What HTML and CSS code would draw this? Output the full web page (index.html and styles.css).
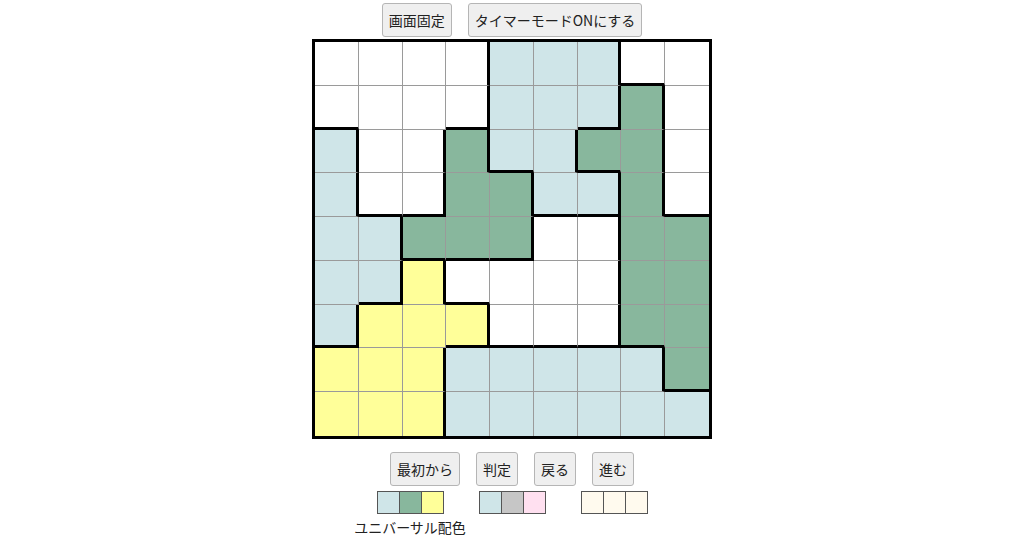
FILE: index.html
```html
<!DOCTYPE html>
<html lang="ja">
<head>
<meta charset="utf-8">
<title>パズル</title>
<link rel="stylesheet" href="styles.css">
</head>
<body>
<div class="page">
  <div class="toolbar top">
    <button class="btn">画面固定</button>
    <button class="btn">タイマーモードONにする</button>
  </div>
  <div class="board">
    <!-- r0 -->
    <div class="cell w"></div><div class="cell w"></div><div class="cell w"></div><div class="cell w r"></div><div class="cell l"></div><div class="cell l"></div><div class="cell l r"></div><div class="cell w b"></div><div class="cell w"></div>
    <!-- r1 -->
    <div class="cell w b"></div><div class="cell w"></div><div class="cell w"></div><div class="cell w r b"></div><div class="cell l"></div><div class="cell l"></div><div class="cell l r b"></div><div class="cell g r"></div><div class="cell w"></div>
    <!-- r2 -->
    <div class="cell l r"></div><div class="cell w"></div><div class="cell w r"></div><div class="cell g r"></div><div class="cell l b"></div><div class="cell l r"></div><div class="cell g b"></div><div class="cell g r"></div><div class="cell w"></div>
    <!-- r3 -->
    <div class="cell l r"></div><div class="cell w b"></div><div class="cell w r b"></div><div class="cell g"></div><div class="cell g r"></div><div class="cell l b"></div><div class="cell l r b"></div><div class="cell g r"></div><div class="cell w b"></div>
    <!-- r4 -->
    <div class="cell l"></div><div class="cell l r"></div><div class="cell g b"></div><div class="cell g b"></div><div class="cell g r b"></div><div class="cell w"></div><div class="cell w r"></div><div class="cell g"></div><div class="cell g"></div>
    <!-- r5 -->
    <div class="cell l"></div><div class="cell l r b"></div><div class="cell y r"></div><div class="cell w b"></div><div class="cell w"></div><div class="cell w"></div><div class="cell w r"></div><div class="cell g"></div><div class="cell g"></div>
    <!-- r6 -->
    <div class="cell l r b"></div><div class="cell y"></div><div class="cell y"></div><div class="cell y r b"></div><div class="cell w b"></div><div class="cell w b"></div><div class="cell w r b"></div><div class="cell g b"></div><div class="cell g"></div>
    <!-- r7 -->
    <div class="cell y"></div><div class="cell y"></div><div class="cell y r"></div><div class="cell l"></div><div class="cell l"></div><div class="cell l"></div><div class="cell l"></div><div class="cell l r"></div><div class="cell g b"></div>
    <!-- r8 -->
    <div class="cell y"></div><div class="cell y"></div><div class="cell y r"></div><div class="cell l"></div><div class="cell l"></div><div class="cell l"></div><div class="cell l"></div><div class="cell l"></div><div class="cell l"></div>
  </div>
  <div class="toolbar bottom">
    <button class="btn">最初から</button>
    <button class="btn">判定</button>
    <button class="btn">戻る</button>
    <button class="btn">進む</button>
  </div>
  <div class="palettes">
    <div class="palette">
      <div class="swatches">
        <span class="sw c-l"></span><span class="sw c-g"></span><span class="sw c-y"></span>
      </div>
      <div class="palette-label">ユニバーサル配色</div>
    </div>
    <div class="palette">
      <div class="swatches">
        <span class="sw c-l"></span><span class="sw c-grey"></span><span class="sw c-pink"></span>
      </div>
    </div>
    <div class="palette">
      <div class="swatches">
        <span class="sw c-cream"></span><span class="sw c-cream"></span><span class="sw c-cream"></span>
      </div>
    </div>
  </div>
</div>
</body>
</html>
```
FILE: styles.css
```css
html, body {
  margin: 0;
  padding: 0;
  background: #ffffff;
}
body {
  font-family: "Noto Sans CJK JP", "Noto Sans", sans-serif;
  color: #222;
  overflow: hidden;
}
.page {
  width: 1024px;
  height: 538px;
  display: flex;
  flex-direction: column;
  align-items: center;
}
.toolbar {
  display: flex;
  justify-content: center;
  gap: 16px;
}
.toolbar.top {
  margin-top: 3px;
}
.toolbar.bottom {
  margin-top: 13px;
}
.btn {
  font-family: "Noto Sans CJK JP", "Noto Sans", sans-serif;
  font-size: 14px;
  line-height: 20px;
  color: #222;
  background: #efefef;
  border: 1px solid #b5b5b5;
  border-radius: 3px;
  padding: 6px 6px;
  margin: 0;
  height: 34px;
  box-sizing: border-box;
  white-space: nowrap;
}
.board {
  margin-top: 2px;
  width: 400px;
  height: 400px;
  box-sizing: border-box;
  border: 3px solid #000;
  display: grid;
  grid-template-columns: repeat(9, 1fr);
  grid-template-rows: repeat(9, 1fr);
}
.cell {
  box-sizing: border-box;
  border-right: 1px solid #9a9a9a;
  border-bottom: 1px solid #9a9a9a;
}
.cell:nth-child(9n) {
  border-right: none;
}
.cell:nth-child(n+73) {
  border-bottom: none;
}
.cell.r {
  border-right: 3px solid #000;
}
.cell.b {
  border-bottom: 3px solid #000;
}
.w { background: #ffffff; }
.l { background: #cfe5e8; }
.g { background: #88b79d; }
.y { background: #ffff99; }

.palettes {
  margin-top: 5px;
  display: flex;
  justify-content: center;
  gap: 35px;
}
.palette {
  width: 67px;
  display: flex;
  flex-direction: column;
  align-items: center;
}
.swatches {
  display: flex;
}
.sw {
  display: block;
  width: 23px;
  height: 23px;
  box-sizing: border-box;
  border: 1px solid #555;
}
.sw + .sw {
  margin-left: -1px;
}
.c-l { background: #cfe5e8; }
.c-g { background: #88b79d; }
.c-y { background: #ffff99; }
.c-grey { background: #c6c6c6; }
.c-pink { background: #ffe0f0; }
.c-cream { background: #fffaee; }
.palette-label {
  margin-top: 3px;
  font-size: 14px;
  line-height: 20px;
  white-space: nowrap;
  color: #222;
}
```
